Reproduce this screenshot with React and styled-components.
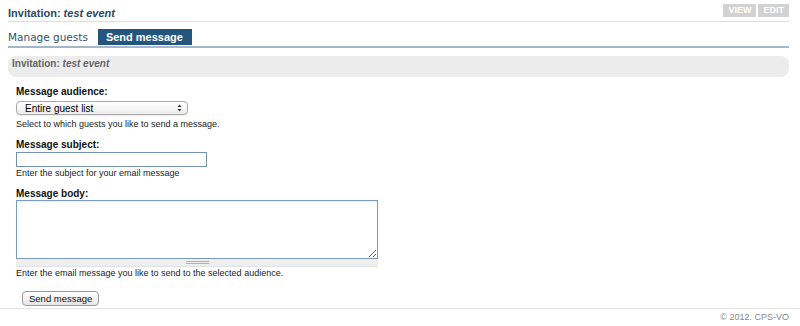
import React from 'react';
import styled, { createGlobalStyle } from 'styled-components';

const GlobalStyle = createGlobalStyle`
  html, body {
    margin: 0;
    padding: 0;
    background: #fff;
  }
  body {
    font-family: "Liberation Sans", Arial, sans-serif;
    color: #222;
  }
`;

const Page = styled.div`
  padding: 0 11px 0 8px;
`;

const Header = styled.div`
  display: flex;
  justify-content: space-between;
  align-items: flex-start;
  height: 17px;
  padding-top: 4px;
  border-bottom: 1px solid #dedede;
`;

const Title = styled.h1`
  margin: 2px 0 0;
  font-size: 11px;
  line-height: 14px;
  font-weight: bold;
  color: #2b4864;

  em {
    font-style: italic;
  }
`;

const Actions = styled.div`
  display: flex;
  gap: 2px;
`;

const ActionButton = styled.span`
  display: block;
  height: 13px;
  padding: 0 5px;
  background: #d2d2d2;
  color: #fff;
  font-size: 9px;
  font-weight: bold;
  line-height: 13px;
`;

const Tabs = styled.div`
  display: flex;
  align-items: flex-end;
  gap: 10px;
  padding: 7px 0 1px;
  border-bottom: 2px solid #a4b7ca;
`;

const Tab = styled.span`
  display: block;
  height: 16px;
  padding: ${({ active }) => (active ? '0 9px 0 8px' : '0')};
  background: ${({ active }) => (active ? '#24557c' : 'transparent')};
  color: ${({ active }) => (active ? '#fff' : '#34536f')};
  font-family: ${({ active }) =>
    active ? '"Liberation Sans", Arial, sans-serif' : '"DejaVu Sans", Verdana, sans-serif'};
  font-size: ${({ active }) => (active ? '11px' : '10.5px')};
  font-weight: ${({ active }) => (active ? 'bold' : 'normal')};
  line-height: 17px;
`;

const Panel = styled.div`
  margin-top: 8px;
  padding: 2px 6px 7px 4px;
  background: #ececec;
  border-radius: 8px;
  font-size: 10px;
  line-height: 12px;
  font-weight: bold;
  color: #666;
`;

const Form = styled.form`
  padding: 0 0 0 8px;
`;

const Field = styled.div`
  margin-top: ${({ top }) => top}px;
`;

const Label = styled.label`
  display: block;
  font-size: 10px;
  line-height: 13px;
  font-weight: bold;
  color: #111;
`;

const Help = styled.div`
  margin-top: ${({ top }) => top || 0}px;
  font-size: 9px;
  line-height: 12px;
  color: #222;
`;

const SelectBox = styled.div`
  display: flex;
  align-items: center;
  justify-content: space-between;
  box-sizing: border-box;
  width: 172px;
  height: 14px;
  margin-top: 3px;
  padding: 0 5px 0 8px;
  border: 1px solid #a9a9a9;
  border-radius: 4px;
  background: linear-gradient(#ffffff, #ececec);
  box-shadow: 0 1px 1px rgba(0, 0, 0, 0.08);
  font-size: 10px;
  color: #000;
`;

const TextInput = styled.input`
  display: block;
  box-sizing: border-box;
  width: 191px;
  height: 15px;
  margin: 1px 0 0;
  padding: 1px 3px;
  border: 1px solid #7592b0;
  background: #fff;
  outline: none;
`;

const TextArea = styled.textarea`
  display: block;
  box-sizing: border-box;
  width: 362px;
  height: 59px;
  margin: 0;
  padding: 2px;
  border: 1px solid #7d9bba;
  box-shadow: inset 0 1px 1px rgba(0, 0, 0, 0.08);
  outline: none;
  resize: vertical;
`;

const Grip = styled.div`
  display: flex;
  justify-content: center;
  align-items: center;
  width: 362px;
  height: 8px;
  background: #eeeeee;
  border-bottom: 1px solid #e2e2e2;
  box-sizing: border-box;
`;

const GripLines = styled.span`
  display: block;
  width: 23px;
  height: 1px;
  border-top: 1px solid #b3b3b3;
  border-bottom: 1px solid #b3b3b3;
`;

const SubmitButton = styled.button`
  display: block;
  height: 15px;
  margin: 12px 0 0 6px;
  padding: 0 6px;
  border: 1px solid #9a9a9a;
  border-radius: 4px;
  background: linear-gradient(#ffffff, #e6e6e6);
  font-family: "Liberation Sans", Arial, sans-serif;
  font-size: 9.5px;
  line-height: 13px;
  color: #111;
`;

const Footer = styled.div`
  margin-top: 2px;
  padding: 2px 11px 0 0;
  border-top: 1px solid #e4e4e4;
  text-align: right;
  font-size: 9px;
  line-height: 12px;
  color: #888;
`;

const Arrows = () => (
  <svg width="5" height="8" viewBox="0 0 5 8">
    <path d="M0.5 3 L2.5 0.5 L4.5 3 Z" fill="#333" />
    <path d="M0.5 5 L2.5 7.5 L4.5 5 Z" fill="#333" />
  </svg>
);

export default function App() {
  return (
    <>
      <GlobalStyle />
      <Page>
        <Header>
          <Title>
            Invitation: <em>test event</em>
          </Title>
          <Actions>
            <ActionButton>VIEW</ActionButton>
            <ActionButton>EDIT</ActionButton>
          </Actions>
        </Header>
        <Tabs>
          <Tab>Manage guests</Tab>
          <Tab active>Send message</Tab>
        </Tabs>
        <Panel>
          Invitation: <em>test event</em>
        </Panel>
        <Form onSubmit={(e) => e.preventDefault()}>
          <Field top={8}>
            <Label>Message audience:</Label>
            <SelectBox>
              <span>Entire guest list</span>
              <Arrows />
            </SelectBox>
            <Help top={3}>Select to which guests you like to send a message.</Help>
          </Field>
          <Field top={8}>
            <Label>Message subject:</Label>
            <TextInput type="text" />
            <Help>Enter the subject for your email message</Help>
          </Field>
          <Field top={8}>
            <Label>Message body:</Label>
            <TextArea />
            <Grip>
              <GripLines />
            </Grip>
            <Help>Enter the email message you like to send to the selected audience.</Help>
          </Field>
          <SubmitButton type="submit">Send message</SubmitButton>
        </Form>
      </Page>
      <Footer>© 2012. CPS-VO</Footer>
    </>
  );
}
